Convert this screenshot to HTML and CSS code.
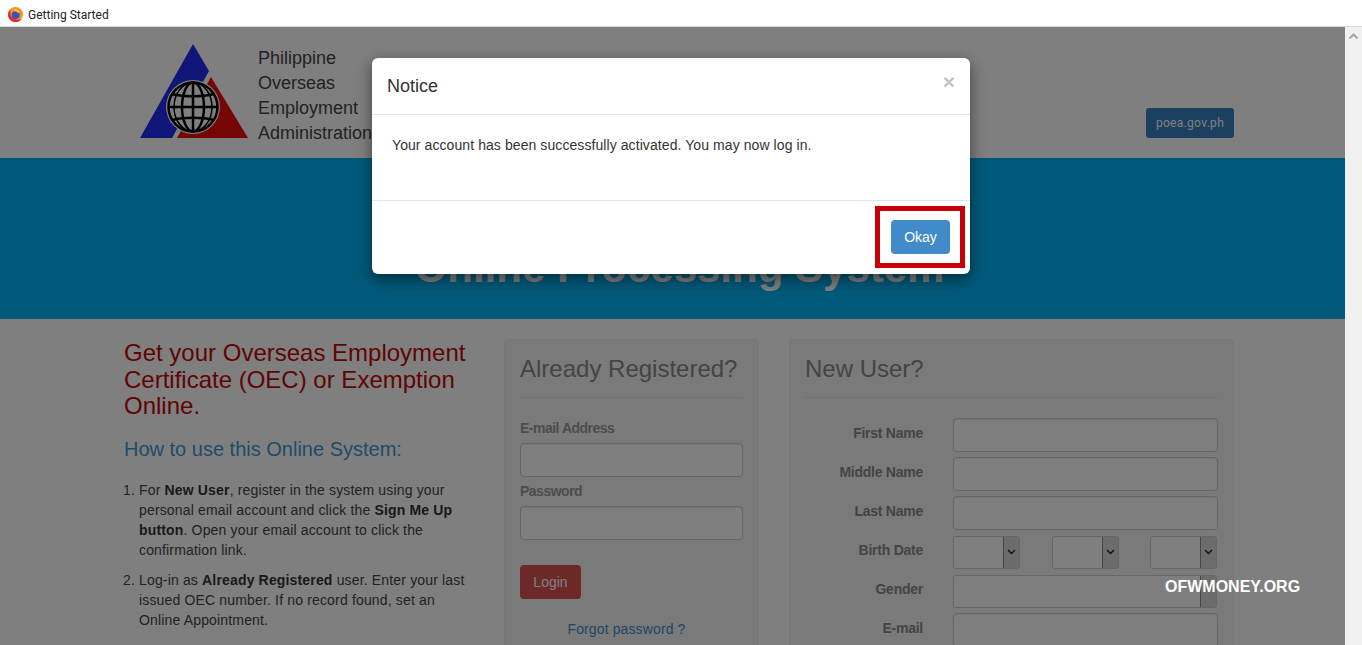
FILE: index.html
```html
<!DOCTYPE html>
<html>
<head>
    <meta charset="utf-8">
    <title>Getting Started</title>
    <link rel="stylesheet" href="styles.css">
</head>
<body>
    <div class="tabbar">
        <svg class="tab-icon" width="15" height="15" viewBox="0 0 16 16">
            <circle cx="8" cy="8" r="8" fill="#f7941e"/>
            <path d="M0 8a8 8 0 0 0 14.500 4.700C12 14 7 14 4 11 2.500 9.500 2 6 3 2.500 1 4 0 6 0 8z" fill="#e1292f"/>
            <circle cx="8.200" cy="8.500" r="4.200" fill="#3f4fc4"/>
            <path d="M6 2.500c2.500-.8 5 .3 6 2.800 .5 1.200-.5 1.500-1.500 .7C9.500 5 8 4.700 7.200 4.800 6.500 4 6.200 3.300 6 2.500z" fill="#fbc531"/>
        </svg>
        <span class="tab-title">Getting Started</span>
    </div>

    <div class="window">
        <div class="viewport">
            <div class="site-header">
                <svg class="logo" width="108" height="96" viewBox="0 0 108 96">
                    <polygon points="53,0 69,27 32,94 0,94" fill="#1f2cf0"/>
                    <polygon points="71,33 108,94 37,94" fill="#f00a0a"/>
                    <circle cx="53" cy="63" r="27" fill="#fff"/>
                    <g fill="none" stroke="#000" stroke-width="2.500">
                        <circle cx="53" cy="63" r="24.500"/>
                        <ellipse cx="53" cy="63" rx="11" ry="24.500"/>
                        <ellipse cx="53" cy="63" rx="19" ry="24.500" stroke-width="1.500"/>
                        <line x1="53" y1="38" x2="53" y2="88"/>
                        <line x1="28.500" y1="63" x2="77.500" y2="63"/>
                        <path d="M32 50c12 3 30 3 42 0"/>
                        <path d="M32 76c12-3 30-3 42 0"/>
                    </g>
                </svg>
                <div class="org-name">Philippine<br>Overseas<br>Employment<br>Administration</div>
                <a class="site-link">poea.gov.ph</a>
            </div>

            <div class="banner">
                <div class="banner-title">Online Processing System</div>
            </div>

            <div class="content">
                <div class="intro">
                    <h1>Get your Overseas Employment Certificate (OEC) or Exemption Online.</h1>
                    <h2>How to use this Online System:</h2>
                    <ol>
                        <li>For <b>New User</b>, register in the system using your personal email account and click the <b>Sign Me Up button</b>. Open your email account to click the confirmation link.</li>
                        <li>Log-in as <b>Already Registered</b> user. Enter your last issued OEC number. If no record found, set an Online Appointment.</li>
                    </ol>
                </div>

                <div class="panel">
                    <div class="panel-title">Already Registered?</div>
                    <label class="stack-label">E-mail Address</label>
                    <div class="input"></div>
                    <label class="stack-label">Password</label>
                    <div class="input"></div>
                    <a class="btn-login">Login</a>
                    <a class="forgot">Forgot password ?</a>
                </div>

                <div class="panel">
                    <div class="panel-title">New User?</div>
                    <div class="form-row">
                        <label>First Name</label>
                        <div class="input"></div>
                    </div>
                    <div class="form-row">
                        <label>Middle Name</label>
                        <div class="input"></div>
                    </div>
                    <div class="form-row">
                        <label>Last Name</label>
                        <div class="input"></div>
                    </div>
                    <div class="form-row">
                        <label>Birth Date</label>
                        <div class="date-selects">
                            <div class="select"><span class="select-arrow"><svg width="9" height="6" viewBox="0 0 9 6"><path d="M1 1l3.500 3.500L8 1" fill="none" stroke="#222" stroke-width="1.500"/></svg></span></div>
                            <div class="select"><span class="select-arrow"><svg width="9" height="6" viewBox="0 0 9 6"><path d="M1 1l3.500 3.500L8 1" fill="none" stroke="#222" stroke-width="1.500"/></svg></span></div>
                            <div class="select"><span class="select-arrow"><svg width="9" height="6" viewBox="0 0 9 6"><path d="M1 1l3.500 3.500L8 1" fill="none" stroke="#222" stroke-width="1.500"/></svg></span></div>
                        </div>
                    </div>
                    <div class="form-row">
                        <label>Gender</label>
                        <div class="select wide"><span class="select-arrow"></span></div>
                    </div>
                    <div class="form-row">
                        <label>E-mail</label>
                        <div class="input"></div>
                    </div>
                </div>
            </div>

            <div class="backdrop"></div>

            <div class="modal">
                <div class="modal-header">
                    <span class="modal-title">Notice</span>
                    <span class="modal-close">×</span>
                </div>
                <div class="modal-body">Your account has been successfully activated. You may now log in.</div>
                <div class="modal-footer">
                    <a class="btn-okay">Okay</a>
                </div>
                <div class="callout"></div>
            </div>
        </div>

        <div class="scrollbar">
            <svg width="11" height="7" viewBox="0 0 11 7"><path d="M1.500 5.500l4-4 4 4" fill="none" stroke="#a6a6a6" stroke-width="2"/></svg>
        </div>
    </div>

    <div class="watermark">OFWMONEY.ORG</div>
</body>
</html>
```

FILE: styles.css
```css
body {
    margin: 0;
    height: 645px;
    overflow: hidden;
    font-family: "Liberation Sans", Arial, sans-serif;
    font-size: 14px;
    line-height: 20px;
    color: #444;
    background: #fff;
}

.tabbar {
    display: flex;
    align-items: center;
    gap: 5px;
    height: 27px;
    padding: 3px 0 0 8px;
    box-sizing: border-box;
    background: #fff;
    border-bottom: 1px solid #d8d8d8;
}

.tab-title {
    font-family: Roboto, sans-serif;
    font-size: 12px;
    color: #222;
}

.window {
    display: flex;
    height: 618px;
}

.viewport {
    position: relative;
    flex: 1;
    overflow: hidden;
    background: #fff;
}

.scrollbar {
    width: 17px;
    background: #f1f1f1;
    display: flex;
    justify-content: center;
    padding-top: 6px;
    box-sizing: border-box;
}

/* header */
.site-header {
    display: flex;
    height: 131px;
    box-sizing: border-box;
    padding: 17px 111px 0 140px;
}

.logo {
    flex-shrink: 0;
}

.org-name {
    margin-left: 10px;
    font-size: 18px;
    line-height: 25px;
    white-space: nowrap;
    padding-top: 2px;
    flex: 1;
}

.site-link {
    align-self: flex-start;
    margin-top: 64px;
    width: 88px;
    height: 30px;
    line-height: 30px;
    text-align: center;
    background: #3a7fc0;
    color: #fff;
    font-family: Roboto, sans-serif;
    font-size: 12px;
    letter-spacing: .3px;
    border-radius: 3px;
}

/* banner */
.banner {
    display: flex;
    justify-content: center;
    align-items: flex-end;
    height: 161px;
    background: #00b3f5;
    padding: 0 0 29px 14px;
    box-sizing: border-box;
}

.banner-title {
    font-size: 42px;
    line-height: 44px;
    font-weight: bold;
    color: #fff;
}

/* lower columns */
.content {
    display: grid;
    grid-template-columns: 350px 255px 445px;
    column-gap: 30px;
    padding: 20px 0 0 124px;
}

.intro h1 {
    margin: 1px 0 0;
    font-size: 24px;
    line-height: 26.500px;
    font-weight: normal;
    color: #c00808;
}

.intro h2 {
    margin: 16px 0 0;
    font-size: 20px;
    line-height: 26px;
    font-weight: normal;
    color: #3f97cf;
}

.intro ol {
    margin: 18px 0 0;
    padding-left: 15px;
    letter-spacing: .16px;
}

.intro li {
    margin-bottom: 10px;
}

.intro b {
    color: #333;
}

.panel {
    background: #f5f5f5;
    border: 1px solid #eee;
    border-radius: 4px;
    padding: 15px 15px 0;
    height: 400px;
    box-sizing: border-box;
}

.panel-title {
    font-size: 24px;
    line-height: 28px;
    color: #888;
    padding-bottom: 14px;
    margin-bottom: 20px;
    border-bottom: 1px solid #e3e3e3;
}

.stack-label {
    display: block;
    font-weight: bold;
    color: #999;
    line-height: 20px;
    margin-bottom: 5px;
    letter-spacing: -.5px;
}

.input {
    height: 34px;
    box-sizing: border-box;
    background: #fff;
    border: 1px solid #ccc;
    border-radius: 4px;
    box-shadow: inset 0 1px 1px rgba(0, 0, 0, .075);
    margin-bottom: 4px;
}

.btn-login {
    display: block;
    width: 61px;
    height: 34px;
    line-height: 34px;
    margin-top: 25px;
    text-align: center;
    color: #fff;
    background: #d9534f;
    border-radius: 4px;
}

.forgot {
    display: block;
    margin-top: 20px;
    padding-right: 10px;
    text-align: center;
    color: #428bca;
    letter-spacing: .12px;
}

.form-row {
    display: flex;
    align-items: center;
    gap: 30px;
    margin-bottom: 5px;
    height: 34px;
}

.form-row label {
    width: 118px;
    flex-shrink: 0;
    padding-bottom: 5px;
    text-align: right;
    font-weight: bold;
    color: #888;
    letter-spacing: -.25px;
}

.form-row .input {
    flex: 1;
    margin-bottom: 0;
}

.date-selects {
    display: flex;
    justify-content: space-between;
    flex: 1;
    padding-right: 1px;
}

.select {
    display: flex;
    justify-content: flex-end;
    width: 67px;
    height: 33px;
    box-sizing: border-box;
    background: #fff;
    border: 1px solid #ccc;
    border-radius: 3px;
}

.select.wide {
    flex: 1;
    width: auto;
    margin-right: 1px;
}

.select-arrow {
    display: flex;
    align-items: center;
    justify-content: center;
    width: 15px;
    background: #d8d8d8;
    border-left: 1px solid #8a8a8a;
    border-radius: 0 2px 2px 0;
}

/* modal on top */
.backdrop {
    position: absolute;
    inset: 0;
    background: rgba(0, 0, 0, .5);
}

.modal {
    position: absolute;
    left: 372px;
    top: 31px;
    width: 598px;
    height: 216px;
    background: #fff;
    border-radius: 6px;
    box-shadow: 0 5px 15px rgba(0, 0, 0, .5);
    color: #333;
}

.modal-header {
    display: flex;
    justify-content: space-between;
    height: 57px;
    box-sizing: border-box;
    padding: 15px 15px 0;
    border-bottom: 1px solid #e5e5e5;
}

.modal-title {
    font-size: 18px;
    line-height: 26px;
}

.modal-close {
    font-size: 21px;
    line-height: 18px;
    font-weight: bold;
    color: #c4c4c4;
}

.modal-body {
    height: 85px;
    box-sizing: border-box;
    padding: 20px;
    letter-spacing: .08px;
}

.modal-footer {
    display: flex;
    justify-content: flex-end;
    height: 74px;
    box-sizing: border-box;
    padding: 19px 20px 0;
    border-top: 1px solid #e5e5e5;
}

.btn-okay {
    width: 59px;
    height: 34px;
    line-height: 34px;
    text-align: center;
    color: #fff;
    background: #428bca;
    border-radius: 4px;
}

.callout {
    position: absolute;
    left: 503px;
    top: 148px;
    width: 90px;
    height: 62px;
    box-sizing: border-box;
    border: 5px solid #c8000a;
}

.watermark {
    position: absolute;
    left: 1165px;
    top: 577px;
    font-size: 16px;
    font-weight: bold;
    color: #fff;
}
```
